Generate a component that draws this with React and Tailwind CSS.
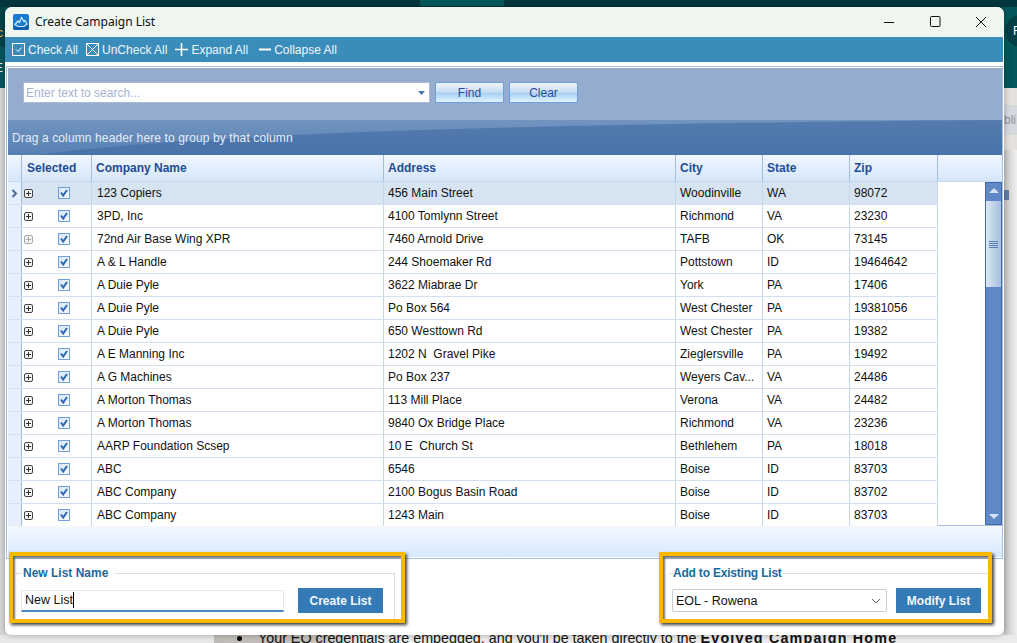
const rows = [
  ['123 Copiers', '456 Main Street', 'Woodinville', 'WA', '98072'],
  ['3PD, Inc', '4100 Tomlynn Street', 'Richmond', 'VA', '23230'],
  ['72nd Air Base Wing XPR', '7460 Arnold Drive', 'TAFB', 'OK', '73145'],
  ['A & L Handle', '244 Shoemaker Rd', 'Pottstown', 'ID', '19464642'],
  ['A Duie Pyle', '3622 Miabrae Dr', 'York', 'PA', '17406'],
  ['A Duie Pyle', 'Po Box 564', 'West Chester', 'PA', '19381056'],
  ['A Duie Pyle', '650 Westtown Rd', 'West Chester', 'PA', '19382'],
  ['A E Manning Inc', '1202 N  Gravel Pike', 'Zieglersville', 'PA', '19492'],
  ['A G Machines', 'Po Box 237', 'Weyers Cav...', 'VA', '24486'],
  ['A Morton Thomas', '113 Mill Place', 'Verona', 'VA', '24482'],
  ['A Morton Thomas', '9840 Ox Bridge Place', 'Richmond', 'VA', '23236'],
  ['AARP Foundation Scsep', '10 E  Church St', 'Bethlehem', 'PA', '18018'],
  ['ABC', '6546', 'Boise', 'ID', '83703'],
  ['ABC Company', '2100 Bogus Basin Road', 'Boise', 'ID', '83702'],
  ['ABC Company', '1243 Main', 'Boise', 'ID', '83703'],
];

const ExpandIcon = ({ muted }) => (
  <svg width="9" height="9" viewBox="0 0 9 9" className="shrink-0">
    <rect x="0.5" y="0.5" width="8" height="8" rx="1.5" fill="#f4f4f4" stroke={muted ? '#a8a8a8' : '#444'} />
    <path d="M2 4.5h5M4.5 2v5" stroke={muted ? '#a8a8a8' : '#333'} />
  </svg>
);

const GridCheck = () => (
  <div className="flex h-3 w-3 items-center justify-center border border-[#6f9fd8] bg-gradient-to-br from-[#d9e7f8] to-[#f5f9fe]">
    <svg width="10" height="10" viewBox="0 0 10 10">
      <path d="M2 4.5 4.2 7.5 8 2" fill="none" stroke="#2d68b8" strokeWidth="2" />
    </svg>
  </div>
);

const AppLogo = () => (
  <svg width="16" height="16" viewBox="0 0 16 16" className="shrink-0">
    <rect width="16" height="16" rx="2" fill="#1a7ad0" />
    <path d="M0 13 16 11V14a2 2 0 0 1-2 2H2a2 2 0 0 1-2-2Z" fill="#0d5eae" />
    <path d="M2 10.5 5 7 6.5 8.5 8.5 3.5 11 7.5 12 6.5 14 10 11 12.5H5Z" fill="none" stroke="#d5edfb" strokeWidth="1.2" />
  </svg>
);

const ToolItem = ({ icon, label }) => (
  <div className="flex items-center gap-[3px]">
    {icon}
    <span>{label}</span>
  </div>
);

const SearchButton = ({ label }) => (
  <button
    type="button"
    className="h-[21px] w-[69px] rounded-[2px] border border-[#6b9fe2] bg-[linear-gradient(#eef5fc_0%,#c9dcf0_48%,#a6cff2_52%,#e0f3fe_100%)] text-xs text-[#2a4c9c]"
  >
    {label}
  </button>
);

const Background = () => (
  <>
    <div className="absolute inset-x-0 top-0 h-[88px] bg-[#04575b]" />
    <div className="absolute inset-x-0 top-0 h-[7px] bg-[#02373d]" />
    <div className="absolute left-0 top-[7px] h-[40px] w-[5px] bg-[#03444a]" />
    <div className="absolute left-[420px] top-0 h-[6px] w-[84px] bg-[#045a5c]" />
    <div className="absolute left-[1005px] top-[15px] flex h-[32px] w-[32px] items-center rounded-full bg-[#033f44] pl-[8px] text-xs text-white">F</div>
    <div className="absolute left-[-3px] top-[25px] text-xs text-[#e8b04a]">c</div>
    <div className="absolute left-[-5px] top-[60px] text-xs text-[#e8eeee]">E</div>
    <div className="absolute inset-x-0 top-[88px] bottom-0 bg-[#e4e0dc]" />
    <div className="absolute left-0 top-[88px] bottom-0 w-[5px] bg-[#d8d8d8]" />
    <div className="absolute left-[1004px] top-[105px] h-[30px] w-[13px] bg-[#d6d8df] text-xs leading-[30px] text-[#8c93a0]">bli</div>
    <div className="absolute left-[1004px] top-[150px] bottom-0 w-[13px] bg-gradient-to-r from-[#c4c4c4] to-[#f0f0f0]" />
    <div className="absolute left-[1004px] top-[190px] h-[10px] w-[5px] bg-[#5f7fa8]" />
    <div className="absolute inset-x-0 bottom-0 h-[8px] bg-[linear-gradient(90deg,#e8e8e8_21%,#c0bcb8_21%,#c4c0bc_31%,#ececec_36%)]" />
    <div className="absolute left-[237px] top-[628px] flex items-center gap-[16px] whitespace-nowrap text-[14.3px] text-[#111] [font-family:'Liberation_Sans',sans-serif]">
      <span className="h-[5px] w-[5px] rounded-full bg-black" />
      <span>
        Your EQ credentials are embedded, and you'll be taken directly to the <b className="tracking-[1.2px]">Evolved Campaign Home</b>
      </span>
    </div>
  </>
);

const Highlight = ({ className }) => (
  <div className={`pointer-events-none absolute top-[552px] h-[71px] border-4 border-[#fdb900] shadow-[2px_2px_3px_rgba(0,0,0,0.75),inset_2px_2px_2px_rgba(0,0,0,0.55)] ${className}`} />
);

const cellClass = 'flex items-center border-r border-[#c6d7ec] pl-[4px] h-full truncate';

export default function App() {
  return (
    <div className="relative h-[643px] w-[1017px] overflow-hidden [font-family:'Liberation_Sans',Arial,sans-serif]">
      <Background />

      <div className="absolute left-[5px] top-[7px] flex h-[628px] w-[999px] flex-col overflow-hidden rounded-t-[7px] rounded-b-[6px] bg-white shadow-[0_0_6px_rgba(0,0,0,0.3)]">
        {/* title bar */}
        <div className="flex h-[30px] shrink-0 items-center bg-[#eff5ef] pl-[8px]">
          <AppLogo />
          <span className="ml-[6px] text-xs text-[#111] [font-family:'Noto_Sans',sans-serif]">Create Campaign List</span>
          <div className="ml-auto flex items-center text-[#111]">
            <svg width="46" height="30" viewBox="0 0 46 30"><path d="M18 15.5h10" stroke="#111" /></svg>
            <svg width="46" height="30" viewBox="0 0 46 30"><rect x="18.5" y="9.5" width="9.5" height="10" rx="1" fill="none" stroke="#111" /></svg>
            <svg width="46" height="30" viewBox="0 0 46 30"><path d="M18 10 28 20M28 10 18 20" stroke="#111" /></svg>
          </div>
        </div>

        {/* toolbar */}
        <div className="mr-px flex h-[25px] shrink-0 items-center gap-[8px] bg-[#3a8dba] pl-[7px] text-xs text-[#eef6fb]">
          <ToolItem
            label="Check All"
            icon={
              <svg width="13" height="13" viewBox="0 0 13 13">
                <rect x="0.5" y="0.5" width="12" height="12" fill="none" stroke="#fff" />
                <path d="M4 6.5 6 8.5 9.500 4.500" fill="none" stroke="#fff" />
              </svg>
            }
          />
          <ToolItem
            label="UnCheck All"
            icon={
              <svg width="13" height="13" viewBox="0 0 13 13">
                <rect x="0.5" y="0.5" width="12" height="12" fill="none" stroke="#fff" />
                <path d="M1 1 12 12M12 1 1 12" stroke="#fff" />
              </svg>
            }
          />
          <ToolItem
            label="Expand All"
            icon={
              <svg width="13" height="13" viewBox="0 0 13 13"><path d="M0 6.500h13M6.500 0v13" stroke="#fff" strokeWidth="1.6" /></svg>
            }
          />
          <div className="ml-[2px]">
            <ToolItem
              label="Collapse All"
              icon={
                <svg width="13" height="13" viewBox="0 0 13 13"><path d="M1 6.500h12" stroke="#fff" strokeWidth="2" /></svg>
              }
            />
          </div>
        </div>
        <div className="h-[4px] shrink-0 bg-white" />

        {/* grid panel */}
        <div className="mx-px flex h-[493px] shrink-0 flex-col border border-[#a5bfe0] bg-white py-px pl-px">
          <div className="flex h-[52px] shrink-0 items-center gap-[5px] bg-[#96acce] pb-[3px] pl-[15px]">
            <div className="flex h-[21px] w-[407px] items-center justify-between border border-[#abbcd9] bg-white pl-[2px] pr-[4px] text-xs text-[#a5b3d0]">
              <span>Enter text to search...</span>
              <svg width="7" height="4" viewBox="0 0 7 4"><path d="M0 0h7L3.500 4Z" fill="#4a76b8" /></svg>
            </div>
            <SearchButton label="Find" />
            <SearchButton label="Clear" />
          </div>

          <div className="relative flex h-[35px] shrink-0 items-center bg-[linear-gradient(#7294bf,#5680b4)] pl-[4px] text-xs tracking-[0.12px] text-[#e6edf6]">
            <svg className="absolute inset-0 h-full w-full" viewBox="0 0 990 35" preserveAspectRatio="none">
              <path d="M30 35C180 14 500 4 990 0V35Z" fill="#3f6aa1" opacity="0.6" />
            </svg>
            <span className="relative">Drag a column header here to group by that column</span>
          </div>

          {/* column headers */}
          <div className="flex h-[26px] shrink-0 bg-[linear-gradient(#f1f7fe,#d5e6fa)] text-xs font-bold text-[#234c94]">
            <div className="w-[14px] shrink-0 border-r border-[#a4bddd]" />
            <div className="flex w-[70px] shrink-0 items-center border-r border-[#a4bddd] pl-[5px]">Selected</div>
            <div className="flex w-[292px] shrink-0 items-center border-r border-[#a4bddd] pl-[4px]">Company Name</div>
            <div className="flex w-[292px] shrink-0 items-center border-r border-[#a4bddd] pl-[4px]">Address</div>
            <div className="flex w-[87px] shrink-0 items-center border-r border-[#a4bddd] pl-[4px]">City</div>
            <div className="flex w-[87px] shrink-0 items-center border-r border-[#a4bddd] pl-[4px]">State</div>
            <div className="flex w-[88px] shrink-0 items-center border-r border-[#a4bddd] pl-[4px]">Zip</div>
            <div className="flex-1" />
          </div>

          {/* rows */}
          <div className="flex h-[345px] shrink-0 border-y border-[#a4bddd] border-t-[#c6d7ec]">
            <div className="flex-1">
              {rows.map((row, i) => (
                <div
                  key={i}
                  className={`flex h-[23px] w-[930px] border-b border-[#d3e0f0] text-xs text-[#111] ${i === 0 ? 'bg-[#d6e4f1]' : 'bg-white'}`}
                >
                  <div className="flex w-[14px] shrink-0 items-center justify-center border-r border-[#a4bddd] bg-[#e6f0fc]">
                    {i === 0 && (
                      <svg width="7" height="9" viewBox="0 0 7 9"><path d="M1.500 1 5 4.500 1.500 8" fill="none" stroke="#456a9e" strokeWidth="2" /></svg>
                    )}
                  </div>
                  <div className="flex w-[70px] shrink-0 items-center border-r border-[#c6d7ec] pl-[2px]">
                    <ExpandIcon muted={i === 2} />
                    <div className="ml-[25px]">
                      <GridCheck />
                    </div>
                  </div>
                  <div className={`${cellClass} w-[292px] shrink-0 !pl-[5px]`}>{row[0]}</div>
                  <div className={`${cellClass} w-[292px] shrink-0 whitespace-pre`}>{row[1]}</div>
                  <div className={`${cellClass} w-[87px] shrink-0`}>{row[2]}</div>
                  <div className={`${cellClass} w-[87px] shrink-0`}>{row[3]}</div>
                  <div className={`${cellClass} w-[88px] shrink-0`}>{row[4]}</div>
                </div>
              ))}
            </div>

            {/* scrollbar */}
            <div className="flex w-[17px] shrink-0 flex-col border border-[#3f6aa5] bg-[#5f88c6]">
              <div className="flex h-[15px] shrink-0 items-center justify-center">
                <svg width="10" height="5" viewBox="0 0 10 5"><path d="M0 5 5 0 10 5Z" fill="#d5e4f5" /></svg>
              </div>
              <div className="mt-[3px] flex h-[86px] shrink-0 flex-col items-center justify-center gap-px bg-[linear-gradient(90deg,#dce8f5,#c5d6ea_40%,#a8bfdc)]">
                <div className="h-px w-[9px] bg-[#5a80b5]" />
                <div className="h-px w-[9px] bg-[#5a80b5]" />
                <div className="h-px w-[9px] bg-[#5a80b5]" />
                <div className="h-px w-[9px] bg-[#5a80b5]" />
              </div>
              <div className="flex-1" />
              <div className="flex h-[15px] shrink-0 items-center justify-center">
                <svg width="10" height="5" viewBox="0 0 10 5"><path d="M0 0 5 5 10 0Z" fill="#d5e4f5" /></svg>
              </div>
            </div>
          </div>

          <div className="flex-1 bg-[linear-gradient(#f4f8fe,#d8e8fb)]" />
        </div>

        {/* bottom forms */}
        <div className="flex flex-1 justify-between pl-[11px] pr-[15px] pt-[6px]">
          <fieldset className="h-[60px] w-[379px] border-t border-r border-[#dddddd] pl-[6px]">
            <legend className="px-px text-xs font-bold text-[#1b6a9b]">
              <span className="pr-[6px]">New List Name</span>
            </legend>
            <div className="-ml-[1px] mt-[7px] flex items-center">
              <div className="flex h-[22px] w-[263px] items-center border border-[#e8e8e8] border-b-2 border-b-[#4e88ba] pl-[3px] text-[12.5px] text-[#111]">
                New List
                <span className="h-[16px] w-px bg-black" />
              </div>
              <button type="button" className="ml-[14px] h-[25px] w-[85px] bg-[#337ab7] text-xs font-bold text-[#f2f7fb]">
                Create List
              </button>
            </div>
          </fieldset>

          <fieldset className="h-[60px] w-[320px] border-t border-[#dddddd] pl-[3px]">
            <legend className="px-px text-xs font-bold tracking-[-0.2px] text-[#1b6a9b]">
              <span>Add to Existing List</span>
            </legend>
            <div className="mt-[7px] flex items-center">
              <div className="flex h-[23px] w-[215px] items-center justify-between rounded-[2px] border border-[#cccccc] pl-[3px] pr-[5px] pt-px text-[12.5px] text-[#111]">
                EOL - Rowena
                <svg width="10" height="6" viewBox="0 0 10 6"><path d="M1 1 5 5 9 1" fill="none" stroke="#666" /></svg>
              </div>
              <button type="button" className="ml-[9px] h-[25px] w-[85px] bg-[#337ab7] text-xs font-bold text-[#f2f7fb]">
                Modify List
              </button>
            </div>
          </fieldset>
        </div>
      </div>

      <Highlight className="left-[9px] w-[396px]" />
      <Highlight className="left-[659px] w-[333px]" />
    </div>
  );
}
